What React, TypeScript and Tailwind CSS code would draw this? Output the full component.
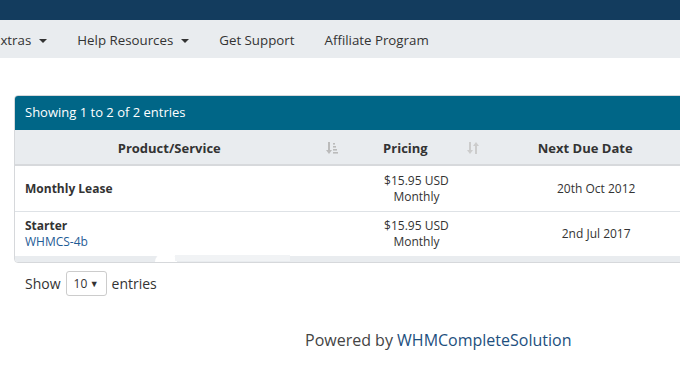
import type { ReactNode } from "react";

const font = { fontFamily: '"Open Sans", "Noto Sans", sans-serif' };

function Caret() {
  return <span className="ml-[8px] inline-block h-0 w-0 border-x-[4px] border-t-[4px] border-x-transparent border-t-[#333]" />;
}

function NavItem({ children, caret }: { children: ReactNode; caret?: boolean }) {
  return (
    <div className="flex items-center px-[15px] pt-[3px] text-[13.3px] text-[#333]">
      {children}
      {caret && <Caret />}
    </div>
  );
}

function SortAmount() {
  return (
    <svg width="12" height="14" viewBox="0 0 12 14" fill="#bbb">
      <rect x="2" y="1" width="2" height="9" />
      <path d="M0 9h6l-3 4z" />
      <rect x="7" y="2" width="2" height="1.6" />
      <rect x="7" y="5" width="3" height="1.6" />
      <rect x="7" y="8" width="4" height="1.6" />
      <rect x="7" y="11" width="5" height="1.6" />
    </svg>
  );
}

function SortBoth() {
  return (
    <svg width="12" height="14" viewBox="0 0 12 14" fill="#ccc">
      <rect x="2" y="1" width="2" height="9" />
      <path d="M0 9h6l-3 4z" />
      <rect x="8" y="4" width="2" height="9" />
      <path d="M6 5h6l-3-4z" />
    </svg>
  );
}

function Th({ children, icon, className }: { children: ReactNode; icon?: ReactNode; className: string }) {
  return (
    <div className={`relative flex items-center justify-center pt-[3px] text-[13px] font-bold text-[#333] ${className}`}>
      {children}
      {icon && <span className="absolute right-[8px] top-[11px]">{icon}</span>}
    </div>
  );
}

export default function App() {
  return (
    <div className="min-h-screen w-[680px] overflow-hidden bg-white" style={font}>
      <div className="h-[20px] bg-[#133c5e]" />
      <nav className="flex h-[38px] items-stretch bg-[#e9ecef]">
        <div className="-ml-[22px] flex">
          <NavItem caret>Extras</NavItem>
          <NavItem caret>Help Resources</NavItem>
          <NavItem>Get Support</NavItem>
          <NavItem>Affiliate Program</NavItem>
        </div>
      </nav>

      <div className="pl-[14px] pt-[37px]">
        <div className="relative w-[700px] overflow-hidden rounded-[4px] border border-[#d6d8db]">
          <div className="flex h-[34px] items-center bg-[#006687] px-[10px] text-[13px] text-white">
            Showing 1 to 2 of 2 entries
          </div>
          <div className="flex h-[36px] border-b-2 border-[#d7d9dc] bg-[#e9ecef]">
            <Th className="w-[331px] pr-[22px]" icon={<SortAmount />}>Product/Service</Th>
            <Th className="w-[142px] pr-[22px]" icon={<SortBoth />}>Pricing</Th>
            <Th className="w-[226px] pr-[30px]" icon={<SortBoth />}>Next Due Date</Th>
          </div>
          <div className="flex h-[46px] items-center border-b border-[#dee2e6] text-[12px] text-[#333]">
            <div className="w-[331px] pl-[10px] font-bold">Monthly Lease</div>
            <div className="w-[142px] text-center leading-[16px]">
              <div>$15.95 USD</div>
              <div>Monthly</div>
            </div>
            <div className="w-[226px] pr-[8px] text-center">20th Oct 2012</div>
          </div>
          <div className="flex h-[44px] items-center text-[12px] text-[#333]">
            <div className="w-[331px] pl-[10px] leading-[16px]">
              <div className="font-bold">Starter</div>
              <div className="text-[#1f5c96]">WHMCS-4b</div>
            </div>
            <div className="w-[142px] text-center leading-[16px]">
              <div>$15.95 USD</div>
              <div>Monthly</div>
            </div>
            <div className="w-[226px] pr-[8px] text-center">2nd Jul 2017</div>
          </div>
          <div className="h-[6px] bg-[#e9ecef]" />
          <div className="absolute bottom-0 left-[140px] h-[8px] w-[22px] rounded-t-full bg-white" />
          <div className="absolute bottom-[1px] left-[160px] h-[6px] w-[115px] bg-[#f1f3f5]" />
        </div>

        <div className="mt-[8px] flex items-center pl-[11px] text-[14px] text-[#333]">
          <span>Show</span>
          <div className="mx-[5px] flex h-[25px] w-[41px] items-center justify-between rounded-[3px] border border-[#ccc] px-[7px] text-[12px]">
            <span>10</span>
            <span className="text-[9px]">▼</span>
          </div>
          <span>entries</span>
        </div>
      </div>

      <div className="mt-[32px] pl-[305px] text-[16px] text-[#444]">
        Powered by <span className="text-[#1d4f7e]">WHMCompleteSolution</span>
      </div>
    </div>
  );
}
